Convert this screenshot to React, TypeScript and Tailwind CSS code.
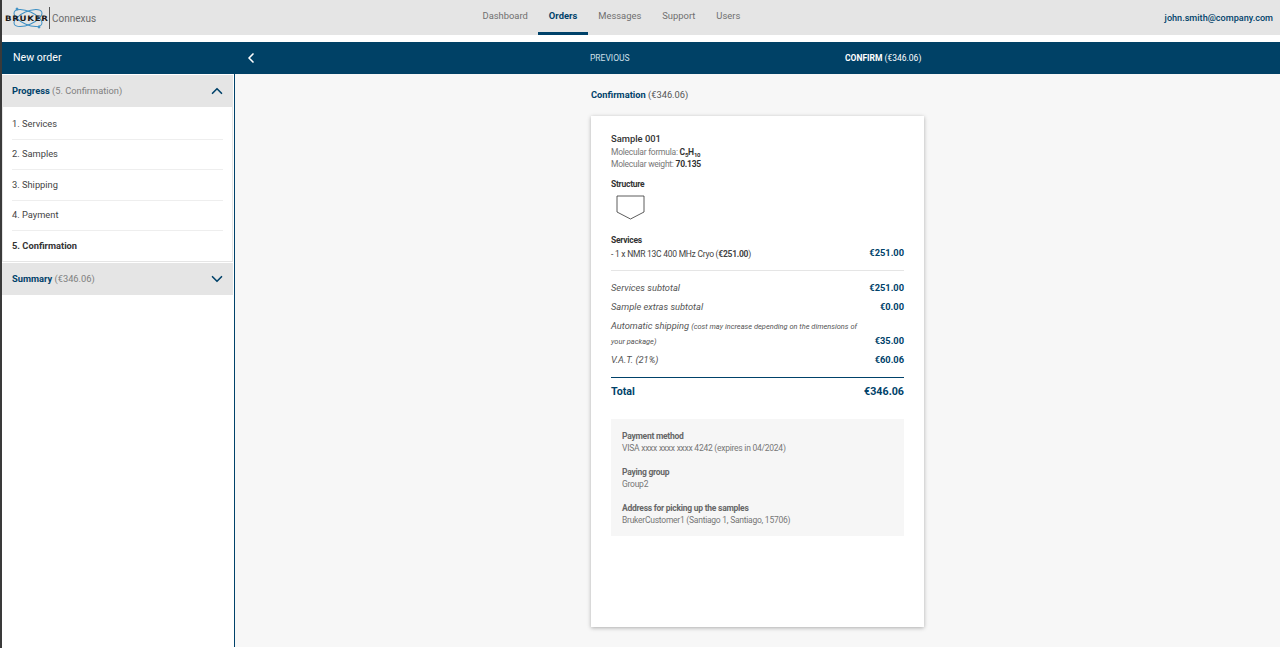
import React from 'react';
import { ChevronDown, ChevronLeft, ChevronUp } from 'lucide-react';

const NAV = ['Dashboard', 'Orders', 'Messages', 'Support', 'Users'];
const STEPS = ['1. Services', '2. Samples', '3. Shipping', '4. Payment'];

const Logo: React.FC = () => (
  <div className="flex items-center h-full pt-[1px]">
    <div className="relative w-[44px] h-[24px] ml-[3px]">
      <svg width="44" height="24" viewBox="0 0 44 24" fill="none" stroke="#3b8fc4" strokeWidth="1" className="absolute left-0 top-0">
        <ellipse cx="23" cy="12" rx="15" ry="6.5" transform="rotate(24 23 12)" />
        <ellipse cx="23" cy="12" rx="15" ry="6.5" transform="rotate(-24 23 12)" />
        <circle cx="12" cy="3" r="1" fill="#3b8fc4" />
        <circle cx="34" cy="21" r="1" fill="#3b8fc4" />
      </svg>
      <span className="absolute left-0 top-[8px] text-[7.5px] leading-[9px] font-bold tracking-[0.6px] text-[#1a1a1a] font-['DejaVu_Sans',sans-serif] scale-x-[1.15] origin-left">
        BRUKER
      </span>
    </div>
    <div className="w-px h-[22px] bg-[#555]" />
    <span className="ml-[2px] text-[10px] text-[#6b6b6b]">Connexus</span>
  </div>
);

const TotalRow: React.FC<{ label: React.ReactNode; value: string; className?: string }> = ({ label, value, className }) => (
  <div className={`flex justify-between items-end ${className ?? ''}`}>
    <div className="italic text-[9.3px] leading-[14px] text-[#555]">{label}</div>
    <div className="font-bold text-[9.3px] leading-[14px] text-[#00426a] shrink-0">{value}</div>
  </div>
);

const InfoBlock: React.FC<{ title: string; text: string }> = ({ title, text }) => (
  <div className="text-[8.5px] leading-[12px] tracking-[-0.25px]">
    <div className="font-bold text-[#666]">{title}</div>
    <div className="text-[#777]">{text}</div>
  </div>
);

export default function App() {
  return (
    <div className="flex h-[648px] w-[1280px] overflow-hidden bg-white font-['Roboto',sans-serif]">
      <div className="w-[2px] h-full bg-[#3a3a3a] shrink-0" />
      <div className="flex-1 flex flex-col min-w-0">
        {/* Top bar */}
        <header className="h-[35px] bg-[#e5e5e5] grid grid-cols-[470px_1fr] shrink-0">
          <Logo />
          <div className="flex justify-between pr-[7px]">
            <nav className="flex">
              {NAV.map((item) => (
                <a
                  key={item}
                  className={`px-[10.5px] pt-[9px] text-[9.4px] leading-[14px] border-b-[3px] ${
                    item === 'Orders' ? 'font-bold text-[#00426a] border-[#00426a]' : 'text-[#6f6f6f] border-transparent'
                  }`}
                >
                  {item}
                </a>
              ))}
            </nav>
            <div className="pt-[11px] text-[9.1px] leading-[14px] font-medium text-[#00426a]">john.smith@company.com</div>
          </div>
        </header>

        <div className="h-[7px] shrink-0" />

        {/* Order bar */}
        <div className="h-[32px] bg-[#004166] flex items-center shrink-0 text-white">
          <div className="w-[233px] pl-[11px] text-[10.6px]">New order</div>
          <ChevronLeft size={16} strokeWidth={2.5} className="ml-[8px]" />
          <div className="ml-[331px] w-[255px] text-[8.5px] text-[#cfe0ea]">PREVIOUS</div>
          <div className="text-[8.5px] font-bold">
            CONFIRM <span className="font-normal">(€346.06)</span>
          </div>
        </div>

        <div className="flex h-[573px] shrink-0">
          {/* Sidebar */}
          <aside className="w-[233px] border-r border-[#00426a] bg-white pt-[1px] shrink-0">
            <div className="w-[231px] h-[32px] bg-[#e5e5e5] flex items-center justify-between pl-[10px] pr-[7px] text-[9.3px]">
              <span>
                <b className="text-[#00426a]">Progress</b> <span className="text-[#808080]">(5. Confirmation)</span>
              </span>
              <ChevronUp size={18} strokeWidth={2.2} className="text-[#00426a]" />
            </div>
            <div className="w-[231px] border border-t-0 border-[#e5e5e5] pt-[2px] px-[9px]">
              {STEPS.map((step, i) => (
                <div
                  key={step}
                  className={`border-b border-[#eeeeee] flex items-center text-[9.3px] text-[#444] ${i % 2 === 0 ? 'h-[31px]' : 'h-[30px]'}`}
                >
                  <span className="pb-[1px]">{step}</span>
                </div>
              ))}
              <div className="h-[30px] flex items-center text-[9.3px] font-bold text-[#333]">5. Confirmation</div>
            </div>
            <div className="w-[231px] h-[32px] mt-[1px] bg-[#e5e5e5] flex items-center justify-between pl-[10px] pr-[7px] text-[9.3px]">
              <span>
                <b className="text-[#00426a]">Summary</b> <span className="text-[#808080]">(€346.06)</span>
              </span>
              <ChevronDown size={18} strokeWidth={2.2} className="text-[#00426a]" />
            </div>
          </aside>

          {/* Content */}
          <main className="flex-1 bg-[#f7f7f7] pl-[356px]">
            <div className="pt-[14px] text-[9.3px] leading-[14px]">
              <b className="text-[#00426a]">Confirmation</b> <span className="text-[#555]">(€346.06)</span>
            </div>
            <section className="mt-[14px] w-[333px] h-[511px] bg-white shadow-[0_1px_4px_rgba(0,0,0,0.3)] px-[20px] pt-[16px]">
              <div className="text-[9.4px] leading-[14px] font-medium text-[#333]">Sample 001</div>
              <div className="text-[8.5px] leading-[12px] tracking-[-0.25px] text-[#777]">
                Molecular formula:{' '}
                <b className="text-[#333]">
                  C<sub className="text-[6px] leading-none">5</sub>H<sub className="text-[6px] leading-none">10</sub>
                </b>
              </div>
              <div className="text-[8.5px] leading-[12px] tracking-[-0.25px] text-[#777]">
                Molecular weight: <b className="text-[#333]">70.135</b>
              </div>
              <div className="mt-[8px] text-[8.5px] leading-[12px] tracking-[-0.25px] font-bold text-[#333]">Structure</div>
              <svg width="30" height="26" viewBox="0 0 30 26" fill="none" stroke="#333" strokeWidth="0.8" className="ml-[5px] mt-[5px] block">
                <path d="M1 1H28V17L14.5 24L1 17Z" />
              </svg>
              <div className="mt-[13px] text-[8.5px] leading-[12px] tracking-[-0.25px] font-bold text-[#333]">Services</div>
              <div className="flex justify-between items-end">
                <div className="text-[8.5px] leading-[14px] tracking-[-0.25px] text-[#444]">
                  - 1 x NMR 13C 400 MHz Cryo (<b>€251.00</b>)
                </div>
                <div className="font-bold text-[9.3px] leading-[14px] text-[#00426a] mb-[1px]">€251.00</div>
              </div>
              <div className="border-t border-[#e5e5e5] mt-[9px] pt-[10px]">
                <TotalRow label="Services subtotal" value="€251.00" />
                <TotalRow className="mt-[5px]" label="Sample extras subtotal" value="€0.00" />
                <TotalRow
                  className="mt-[4px]"
                  label={
                    <div className="w-[255px] leading-[15px]">
                      Automatic shipping{' '}
                      <span className="text-[7.45px] leading-none">
                        (cost may increase depending on the dimensions of your package)
                      </span>
                    </div>
                  }
                  value="€35.00"
                />
                <TotalRow className="mt-[5px]" label="V.A.T. (21%)" value="€60.06" />
              </div>
              <div className="border-t border-[#00426a] mt-[10px] pt-[7px] flex justify-between text-[#00426a] font-bold text-[10.7px] leading-[14px]">
                <span>Total</span>
                <span>€346.06</span>
              </div>
              <div className="mt-[20px] bg-[#f6f6f6] h-[117px] px-[11px] pt-[11px] flex flex-col gap-[12px]">
                <InfoBlock title="Payment method" text="VISA xxxx xxxx xxxx 4242 (expires in 04/2024)" />
                <InfoBlock title="Paying group" text="Group2" />
                <InfoBlock title="Address for picking up the samples" text="BrukerCustomer1 (Santiago 1, Santiago, 15706)" />
              </div>
            </section>
          </main>
        </div>
      </div>
    </div>
  );
}
